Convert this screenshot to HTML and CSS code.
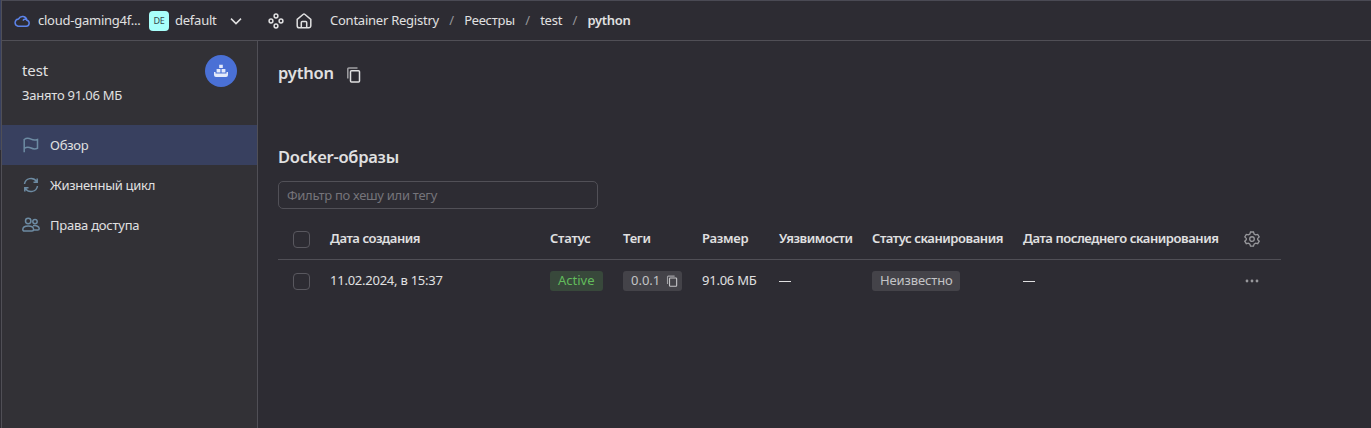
FILE: index.html
```html
<!DOCTYPE html>
<html lang="ru">
<head>
<meta charset="utf-8">
<title>Container Registry</title>
<link rel="stylesheet" href="styles.css">
</head>
<body>
<div class="rail"><div class="rail-active"></div></div>
<div class="app">
  <header class="topbar">
    <svg class="cloud" width="16" height="16" viewBox="0 0 16 16"><path d="M4 13.200h8a3 3 0 0 0 .9-5.900A4.400 4.400 0 0 0 4.600 5.900 3.700 3.700 0 0 0 4 13.200zM9 7.600a2.600 2.600 0 0 1 3.600-1"/></svg>
    <span class="t cloud-name">cloud-gaming4f...</span>
    <span class="badge">DE</span>
    <span class="t folder">default</span>
    <svg class="chev" width="14" height="14" viewBox="0 0 14 14"><path d="M2 4.600l5 5 5-5"/></svg>
    <svg class="services" width="16" height="16" viewBox="0 0 16 16"><circle cx="8" cy="3" r="1.900"/><circle cx="3" cy="8" r="1.900"/><circle cx="13" cy="8" r="1.900"/><circle cx="8" cy="13" r="1.900"/></svg>
    <svg class="home" width="16" height="16" viewBox="0 0 16 16"><path d="M1.200 6.400L7 1.500a1.600 1.600 0 0 1 2 0l5.800 4.900V12.700a2.100 2.100 0 0 1-2.100 2.100H3.300a2.100 2.100 0 0 1-2.100-2.100zM5.300 14.800V9.500a1 1 0 0 1 1-1h3.400a1 1 0 0 1 1 1v5.300"/></svg>
    <nav class="crumbs">
      <span class="t">Container Registry</span><i>/</i>
      <span class="t">Реестры</span><i>/</i>
      <span class="t">test</span><i>/</i>
      <span class="t current">python</span>
    </nav>
  </header>
  <div class="body">
    <aside class="side">
      <div class="side-head">
        <div>
          <div class="reg-name">test</div>
          <div class="reg-size">Занято 91.06 МБ</div>
        </div>
        <div class="logo"><svg width="16" height="16" viewBox="0 0 16 16"><path d="M6.200 1.800h3.600v3.200H6.200zM3.600 6h3.800v3.400H3.600zM8.600 6h3.800v3.400H8.600zM1 9h1.500v1.400h11V9H15v3a2 2 0 0 1-2 2H3a2 2 0 0 1-2-2z"/></svg></div>
      </div>
      <a class="item active"><svg width="16" height="16" viewBox="0 0 16 16"><path d="M1.200 15.200V2.500C4 .5 6 1.200 8 2.200s4 1.300 6.500.3v8.800c-2.500 1-4.500.7-6.500-.3s-4-1.300-6.800.3"/></svg><span class="t">Обзор</span></a>
      <a class="item"><svg width="16" height="16" viewBox="0 0 16 16"><path d="M1.500 7a6.600 6.600 0 0 1 12-2.600M14.200 1.500v3.800h-3.700M14.500 9a6.600 6.600 0 0 1-12 2.600M1.800 14.500v-3.800h3.700"/></svg><span class="t cycle">Жизненный цикл</span></a>
      <a class="item"><svg width="18" height="16" viewBox="0 0 18 16"><circle cx="6.200" cy="4" r="2.700"/><circle cx="13" cy="4.600" r="2.200"/><path d="M.8 12.500c0-2.300 2.300-3.600 5.400-3.600s5.400 1.300 5.400 3.600c0 1-.6 1.500-1.600 1.500H2.400c-1 0-1.600-.5-1.600-1.500zM11 8.800c3.600-.7 6.200.8 6.200 3 0 .9-.6 1.300-1.500 1.300h-4"/></svg><span class="t">Права доступа</span></a>
    </aside>
    <main class="main">
      <div class="title-row"><h1>python</h1><svg class="copy" width="16" height="16" viewBox="0 0 16 16"><path class="back" d="M1.800 11.500V2a1 1 0 0 1 1-1h8.700"/><rect x="4.500" y="3.700" width="9" height="11.300" rx="1"/></svg></div>
      <h2>Docker-образы</h2>
      <div class="filter">Фильтр по хешу или тегу</div>
      <div class="row head">
        <span class="check"></span><span class="t">Дата создания</span><span class="t short">Статус</span><span class="t short">Теги</span><span class="t short">Размер</span><span class="t">Уязвимости</span><span class="t">Статус сканирования</span><span class="t">Дата последнего сканирования</span>
        <svg class="gear" width="16" height="16" viewBox="0 0 16 16"><path d="M6.500 1h3l.6 2 1.500.9 2.100-.5 1.500 2.500L13.700 7.400v1.300l1.500 1.500-1.500 2.500-2.100-.5-1.500.9-.6 2h-3l-.6-2-1.500-.9-2.100.5L.8 10.200l1.500-1.500V7.400L.8 5.900l1.500-2.500 2.100.5L5.900 3z"/><circle cx="8" cy="8.050" r="2.300"/></svg>
      </div>
      <div class="row data">
        <span class="check"></span><span class="t">11.02.2024, в 15:37</span>
        <span class="tag ok">Active</span>
        <span class="tag ver"><span>0.0.1</span><svg class="copy" width="12" height="12" viewBox="0 0 16 16"><path class="back" d="M2 12V2.500a1 1 0 0 1 1-1h8.500"/><rect x="4.700" y="4" width="9.500" height="11" rx="1"/></svg></span>
        <span class="t size">91.06 МБ</span><span class="dash"></span>
        <span class="tag unk">Неизвестно</span>
        <span class="dash"></span>
        <svg class="dots" width="16" height="16" viewBox="0 0 16 16"><circle cx="3" cy="8" r="1.400"/><circle cx="8" cy="8" r="1.400"/><circle cx="13" cy="8" r="1.400"/></svg>
      </div>
    </main>
  </div>
</div>
</body>
</html>
```
FILE: styles.css
```css
* { box-sizing: border-box; }
body {
  margin: 0; height: 428px; display: flex; overflow: hidden;
  background: #2d2c33; color: #e0e0e1;
  font: 13px/20px "Noto Sans", "Open Sans", sans-serif;
  letter-spacing: -0.24px;
}
svg { fill: none; stroke: currentColor; stroke-width: 1.5; flex: none; }
.t { white-space: nowrap; }
.rail { width: 2px; background: #2d2c33; border-right: 1px solid #504f56; }
.rail-active { height: 150px; background: #38405f; }
.app { flex: 1; display: flex; flex-direction: column; border-top: 1px solid #4a4a54; }
.topbar { flex: none; height: 40px; display: flex; align-items: center; border-bottom: 1px solid #504f56; padding-left: 12px; }
.topbar .t { padding-bottom: 2px; }
.cloud { color: #5c83ea; margin-right: 8px; }
.cloud-name { width: 111px; }
.badge { width: 20px; height: 20px; border-radius: 4px; background: #a8fffb; color: #35474c; font-size: 9px; text-align: center; margin-right: 6px; }
.folder { width: 54px; }
.chev { margin-right: 25px; }
.services { margin-right: 12px; }
.crumbs { display: flex; margin-left: 18px; }
.crumbs i { width: 25.3px; text-align: center; font-style: normal; color: #96969a; }
.current { font-weight: 600; letter-spacing: -0.3px; }
.body { flex: 1; display: flex; }
.side { width: 256px; background: #323136; border-right: 1px solid #504f56; }
.side-head { height: 84px; display: flex; justify-content: space-between; padding: 14px 20px 0; }
.reg-name { font-size: 15px; line-height: 30px; padding-bottom: 2px; letter-spacing: -0.1px; }
.reg-size { line-height: 17px; }
.logo { width: 32px; height: 32px; border-radius: 50%; background: #4a70d5; display: grid; place-items: center; }
.logo svg { fill: #e4eafa; stroke: none; }
.item { height: 40px; display: flex; align-items: center; padding-left: 20px; }
.item svg { width: 18px; color: #6d8ba3; margin-right: 10px; }
.item.active { background: #38405f; }
.cycle { letter-spacing: -0.3px; }
.main { flex: 1; padding: 19px 0 0 20px; }
h1, h2 { margin: 0; font-size: 16.5px; line-height: 24px; font-weight: 600; letter-spacing: -0.26px; }
.title-row { display: flex; align-items: center; height: 26px; margin-bottom: 59px; }
.title-row h1 { width: 68px; letter-spacing: -0.2px; }
.title-row svg { margin-top: 3px; }
.copy .back { color: #a0a0a4; }
.filter { width: 320px; height: 28px; margin-top: 12px; border: 1px solid #515057; border-radius: 5px; padding: 3px 8px; color: #75747a; letter-spacing: -0.29px; }
.row { width: 1003px; display: grid; align-items: center; grid-template-columns: 52px 220px 73px 79px 77px 93px 151px 221px 1fr; }
.row > .t { padding-bottom: 2px; }
.head { height: 51px; padding: 17px 0 8px; border-bottom: 1px solid #504f56; font-weight: 600; letter-spacing: -0.44px; }
.head .short { letter-spacing: -0.25px; }
.head .check { margin-top: 1px; }
.data { height: 42px; }
.check { width: 17px; height: 17px; margin-left: 15px; border: 1px solid #59585f; border-radius: 4px; }
.tag { display: flex; align-items: center; height: 20px; border-radius: 3px; background: #444349; padding: 0 0 2px 8px; color: #c3c3c6; letter-spacing: -0.12px; }
.tag svg { margin-top: 2px; }
.ok { width: 53px; background: #38483b; color: #62bc5b; letter-spacing: 0; }
.ver { width: 59px; letter-spacing: 0; }
.ver span { width: 35px; }
.unk { width: 88px; }
.size { letter-spacing: -0.24px; }
.dash { width: 12px; height: 1px; background: #e0e0e1; }
.gear, .dots { color: #98989c; }
.gear { stroke-width: 1.3; }
.dots { fill: currentColor; stroke: none; }
```
